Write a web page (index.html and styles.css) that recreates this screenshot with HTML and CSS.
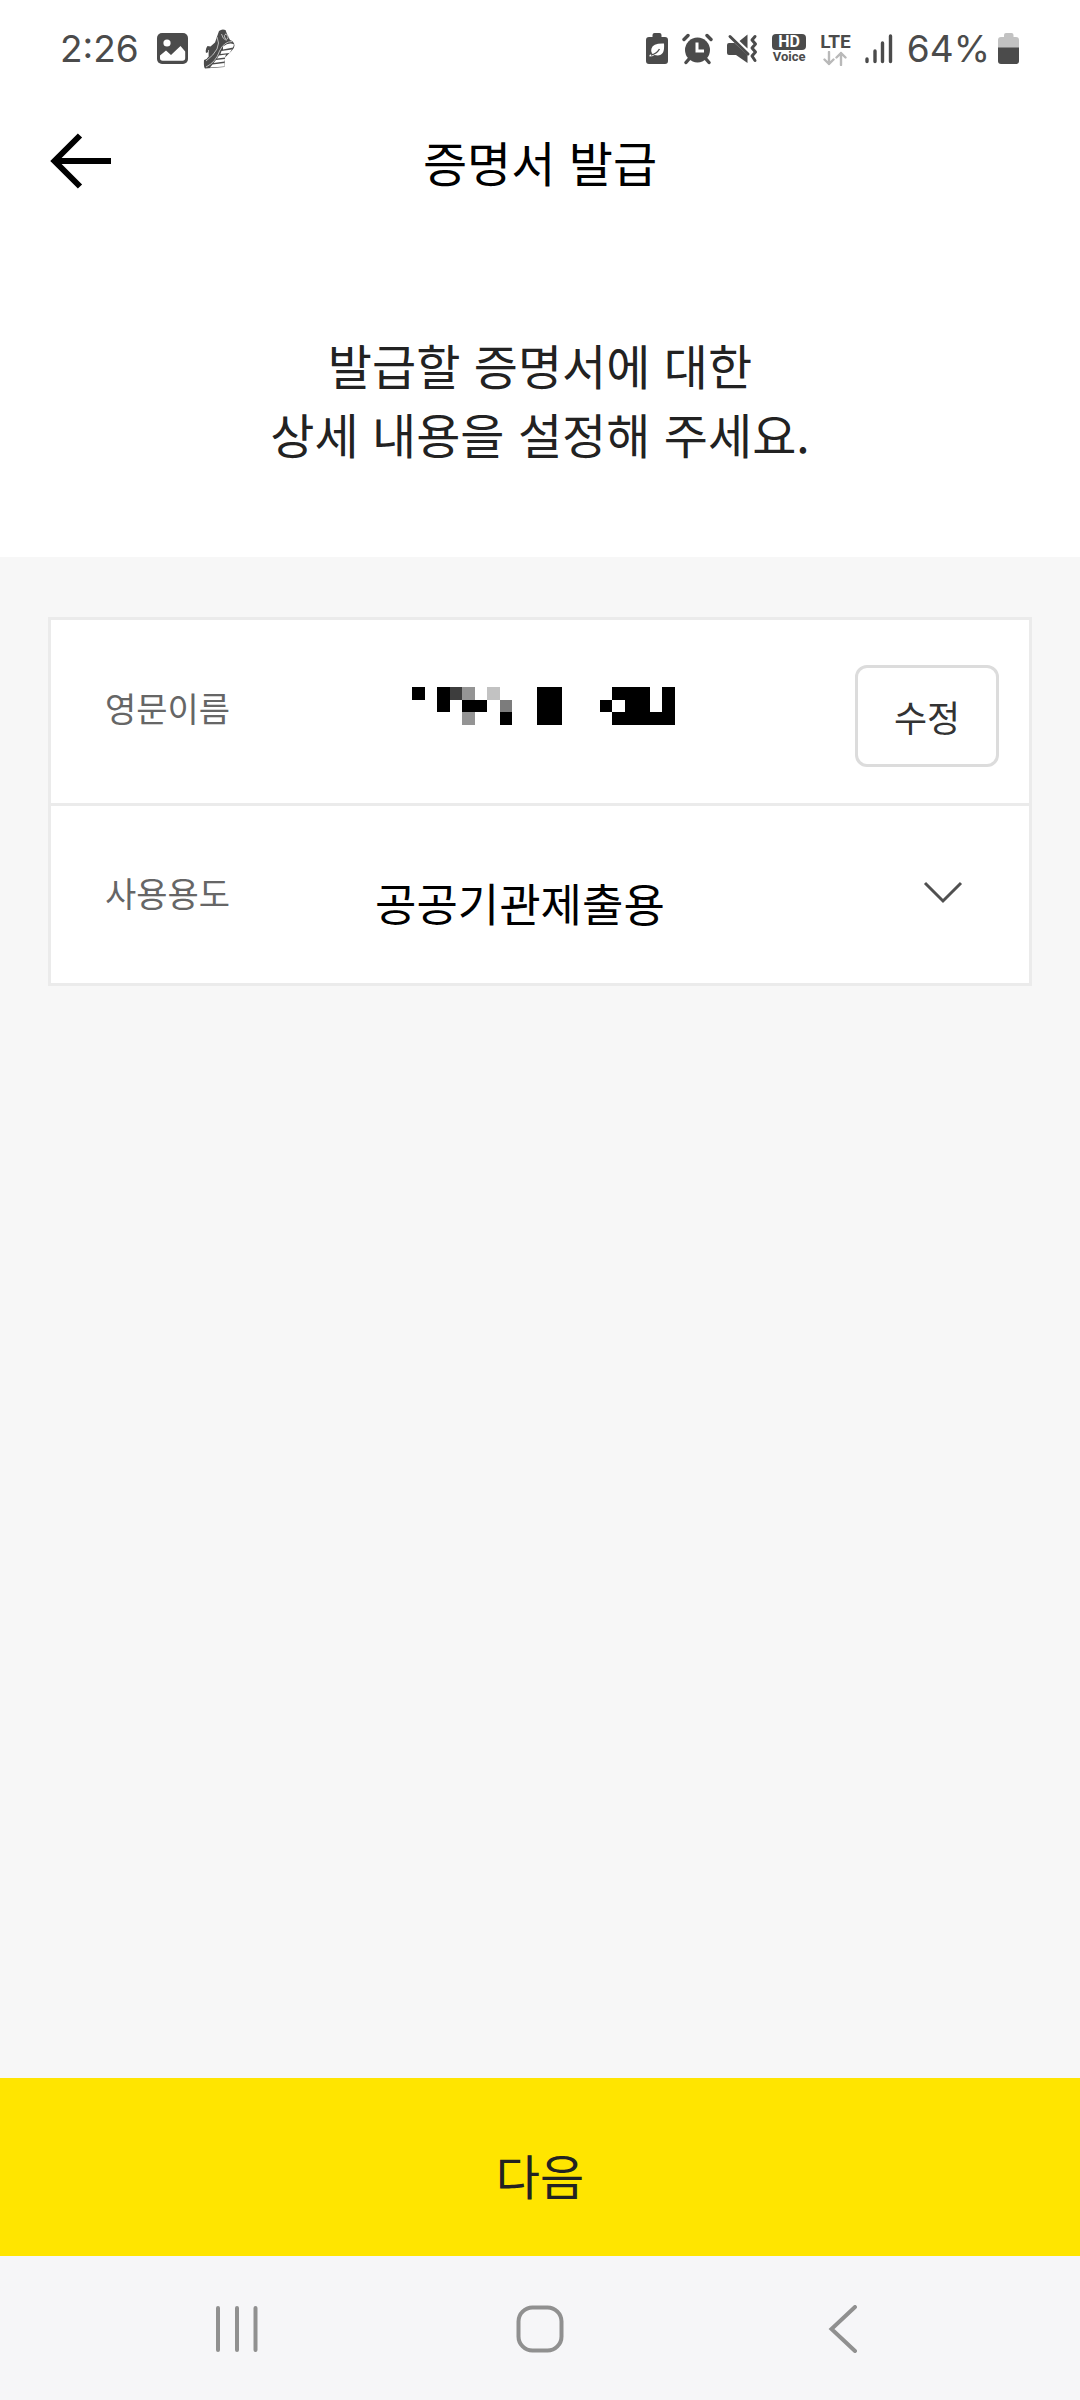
FILE: index.html
```html
<!DOCTYPE html>
<html lang="ko">
<head>
	<meta charset="UTF-8">
	<meta name="viewport" content="width=device-width, initial-scale=1">
	<title>증명서 발급</title>
	<link rel="stylesheet" href="styles.css">
</head>
<body>
<div class="status">
	<div class="status-left">
		<span class="clock">2:26</span>
		<svg class="icon-photo" width="32" height="32" viewBox="0 0 32 32">
			<rect x="0" y="0" width="31" height="31" rx="5" fill="#4b4b4b"/>
			<circle cx="10" cy="10" r="3.6" fill="#fff"/>
			<path d="M3 22.5l6-5 5 4.5L23.500 13l4.700 5.500V25q0 2.700-2.700 2.700H5.700Q3 27.700 3 25z" fill="#fff"/>
		</svg>
		<svg width="33" height="40" viewBox="0 0 33 40">
			<path d="M16 2q3-2.500 6.500-1L24 5l3 6q4 1 4.500 5.500 0 3-3 5.500L22 28.500 21.500 38 2 39.500Q.5 38.500 1 31q3-.5 5-4l-.5-4L3 24q-1-4 1.500-7l3 .5 4.500-4z" fill="#4b4b4b"/>
			<path d="M20 17.500Q26 13 31 15.500l-1 3-10 2zM18.500 22l10.500-1.500-2.500 3.500-9 1zM16 26.500l7-1-1 3-8 1zM13 31l9-1-.500 2.500-11 1.500zM9.500 35.500l12-1.500v3.500L7 38.500z" fill="#fff"/>
			<path d="M3 38Q13 33 16.500 22 21 12.500 29 12.500M14 8Q17 14 14 20T3 32M18.500 5q1 5 5 6.500M22 5q4 1 3 4t-3 0 1-4M5.500 21v6" stroke="#bbb" stroke-width="1" fill="none"/>
		</svg>
	</div>
	<div class="status-right">
		<svg width="22" height="32" viewBox="0 0 22 32">
			<path d="M6.500 4V2q0-2 2-2h5q2 0 2 2v2H19q3 0 3 3v21q0 3-3 3H3q-3 0-3-3V7q0-3 3-3z" fill="#4b4b4b"/>
			<path d="M18 10.500Q7 10 5.500 15.500q-.9 3.500 1 5L3.500 22v1.500q3 0 5-1.500 6 1.500 8.500-2.500 1.500-3 1-9z" fill="#fff"/>
			<path d="M5 22q5.500-1 8.500-6" stroke="#4b4b4b" stroke-width="1.400" fill="none"/>
		</svg>
		<svg width="31" height="32" viewBox="0 0 31 32">
			<path d="M2 6.500L6 2.500M29 6.500L25 2.500M7 26l-3 3.500M24 26l3 3.500" stroke="#4b4b4b" stroke-width="3.400" stroke-linecap="round"/>
			<circle cx="15.500" cy="17" r="12.500" fill="#4b4b4b"/>
			<path d="M15 9.500v8.500h7" stroke="#fff" stroke-width="3" fill="none"/>
		</svg>
		<svg width="31" height="32" viewBox="0 0 31 32">
			<path d="M2 10h5.500L20.500 22v8L9 22H2q-2 0-2-2v-8q0-2 2-2zM20.500 1.500v14L12.500 8z" fill="#4b4b4b"/>
			<path d="M3 3.500L21 21" stroke="#4b4b4b" stroke-width="3" stroke-linecap="round"/>
			<path d="M28 3.500L25 7l3.500 4L25 15l3.500 4-3.500 4 3 4.500" stroke="#4b4b4b" stroke-width="3" stroke-linecap="round" stroke-linejoin="round" fill="none"/>
		</svg>
		<span class="hd"><span class="hd-top">HD</span><span class="hd-voice">Voice</span></span>
		<span class="lte">
			<span class="lte-text">LTE</span>
			<svg width="24" height="15" viewBox="0 0 24 15">
				<path d="M6 1v12M1.500 8.500L6 13l4.500-4.500M18 14V2M13.500 6.500L18 2l4.500 4.500" stroke="#b9b9b9" stroke-width="2.400" stroke-linecap="round" stroke-linejoin="round" fill="none"/>
			</svg>
		</span>
		<svg width="28" height="30" viewBox="0 0 28 30">
			<path d="M2 25v2.500M10 17v10.500M17.500 9v18.500M25.500 2v25.500" stroke="#4b4b4b" stroke-width="3.400" stroke-linecap="round"/>
		</svg>
		<span class="level">64%</span>
		<svg width="22" height="32" viewBox="0 0 22 32">
			<path d="M6 4V2q0-2 2-2h5.500q2 0 2 2v2H18q3 0 3 3v8H0V7q0-3 3-3z" fill="#c2c2c2"/>
			<path d="M0 14.500h21V28q0 3-3 3H3q-3 0-3-3z" fill="#4b4b4b"/>
		</svg>
	</div>
</div>

<header class="header">
	<button class="back" type="button" aria-label="뒤로">
		<svg width="62" height="58" viewBox="0 0 62 58">
			<path d="M61 29H5M30 3.500L4.500 29 30 54.500" stroke="#000" stroke-width="6" fill="none"/>
		</svg>
	</button>
	<h1 class="title">증명서 발급</h1>
</header>

<p class="guide">발급할 증명서에 대한<br>상세 내용을 설정해 주세요.</p>

<main class="content">
	<div class="card">
		<div class="row row-name">
			<span class="label">영문이름</span>
			<!-- 이름은 모자이크 처리 -->
			<svg class="mosaic" width="263" height="38" viewBox="0 0 21 3" preserveAspectRatio="none" shape-rendering="crispEdges">
				<path d="M0 0h1v1H0zM2 0h1v2H2zM4 1h2v1H4zM7 2h1v1H7zM10 0h2v3h-2zM15 1h1v1h-1zM16 0h3v2h1V0h1v3h-5V2h1V1h-1z" fill="#000"/>
				<path d="M3 0h1v1H3z" fill="#3d3d3d"/>
				<path d="M4 0h1v1H4zM4 2h1v1H4z" fill="#949494"/>
				<path d="M6 0h1v1H6z" fill="#c2c2c2"/>
				<path d="M7 1h1v1H7z" fill="#7c7c7c"/>
			</svg>
			<button class="edit" type="button">수정</button>
		</div>
		<div class="row row-use">
			<label class="label" for="use">사용용도</label>
			<select class="use" id="use">
				<option>공공기관제출용</option>
			</select>
			<svg class="arrow" width="40" height="24" viewBox="0 0 40 24">
				<path d="M2 2l18 18L38 2" stroke="#505050" stroke-width="3" fill="none"/>
			</svg>
		</div>
	</div>
</main>

<button class="next" type="button">다음</button>

<nav class="nav">
	<button class="nav-btn" type="button" aria-label="최근 앱">
		<svg width="48" height="48" viewBox="0 0 48 48">
			<path d="M5 3v42M24 3v42M42.500 3v42" stroke="#909090" stroke-width="4" stroke-linecap="round"/>
		</svg>
	</button>
	<button class="nav-btn" type="button" aria-label="홈">
		<svg width="48" height="48" viewBox="0 0 48 48">
			<rect x="2.500" y="2.500" width="43" height="43" rx="14" stroke="#909090" stroke-width="4" fill="none"/>
		</svg>
	</button>
	<button class="nav-btn" type="button" aria-label="이전">
		<svg width="48" height="48" viewBox="0 0 48 48">
			<path d="M36 2L12.500 24 36 46" stroke="#909090" stroke-width="4" stroke-linecap="round" fill="none"/>
		</svg>
	</button>
</nav>
</body>
</html>
```
FILE: styles.css
```css
* {
	padding: 0;
	margin: 0;
	box-sizing: border-box;
}

body {
	min-height: 100vh;
	display: flex;
	flex-direction: column;
	background-color: #fff;
	font-family: "Noto Sans CJK KR", sans-serif;
	font-weight: 400;
	color: #222;
}

svg {
	display: block;
	flex-shrink: 0;
}

button {
	font: inherit;
	color: inherit;
	border: none;
	background: none;
	cursor: pointer;
}

/* 상태바 */
.status {
	height: 96px;
	padding: 2px 60px 0;
	display: flex;
	align-items: center;
	justify-content: space-between;
	font-family: Inter, sans-serif;
	color: #4b4b4b;
}

.status-left,
.status-right {
	display: flex;
	align-items: center;
	gap: 14px;
}

.clock,
.level {
	font-size: 37px;
	line-height: 48px;
}

.icon-photo {
	margin-left: 4px;
}

.level {
	margin-right: -6px;
}

.hd {
	display: flex;
	flex-direction: column;
	align-items: center;
	font-family: Roboto, sans-serif;
	font-weight: 700;
}

.hd-top {
	width: 34px;
	height: 16px;
	border-radius: 4px;
	background-color: #4b4b4b;
	color: #fff;
	font-size: 16px;
	line-height: 16px;
	text-align: center;
}

.hd-voice {
	font-size: 13px;
	line-height: 14px;
}

.lte {
	display: flex;
	flex-direction: column;
	align-items: center;
	font-family: Roboto, sans-serif;
}

.lte-text {
	font-size: 19px;
	line-height: 18px;
	font-weight: 700;
}

/* 헤더 */
.header {
	height: 130px;
	padding: 0 50px;
	display: grid;
	grid-template-columns: 1fr auto 1fr;
	align-items: center;
}

.back {
	justify-self: start;
}

.title {
	font-size: 48px;
	line-height: 70px;
	font-weight: 400;
	color: #000;
}

.guide {
	padding: 104px 50px 89px;
	font-size: 48px;
	line-height: 69px;
	text-align: center;
}

/* 내용 */
.content {
	flex: 1;
	padding: 60px 48px;
	background-color: #f7f7f7;
}

.card {
	border: 3px solid #ebebeb;
	background-color: #fff;
}

.row {
	display: grid;
	grid-template-columns: 270px 1fr auto;
	align-items: center;
	padding: 0 30px 0 54px;
}

.row-name {
	height: 186px;
	padding-bottom: 4px;
	border-bottom: 3px solid #ebebeb;
}

.row-use {
	height: 177px;
}

.label {
	padding-bottom: 4px;
	font-size: 34px;
	line-height: 48px;
	color: #666;
}

.mosaic {
	margin: 0 0 8px 37px;
}

.edit {
	width: 144px;
	height: 102px;
	margin-top: 12px;
	border: 3px solid #dcdcdc;
	border-radius: 12px;
	font-size: 36px;
	color: #333;
}

.use {
	grid-column: 2 / 4;
	grid-row: 1;
	width: 100%;
	height: 100%;
	padding-top: 16px;
	border: none;
	background: none;
	appearance: none;
	font-family: inherit;
	font-size: 45px;
	color: #000;
}

.arrow {
	grid-column: 3;
	grid-row: 1;
	margin: 0 36px 4px 0;
	pointer-events: none;
}

/* 하단 */
.next {
	height: 178px;
	padding-top: 14px;
	background-color: #ffe500;
	font-size: 48px;
}

.nav {
	height: 144px;
	padding: 2px 86px 0;
	display: grid;
	grid-template-columns: repeat(3, 1fr);
	background-color: #f6f6f8;
}

.nav-btn {
	display: flex;
	align-items: center;
	justify-content: center;
}
```
